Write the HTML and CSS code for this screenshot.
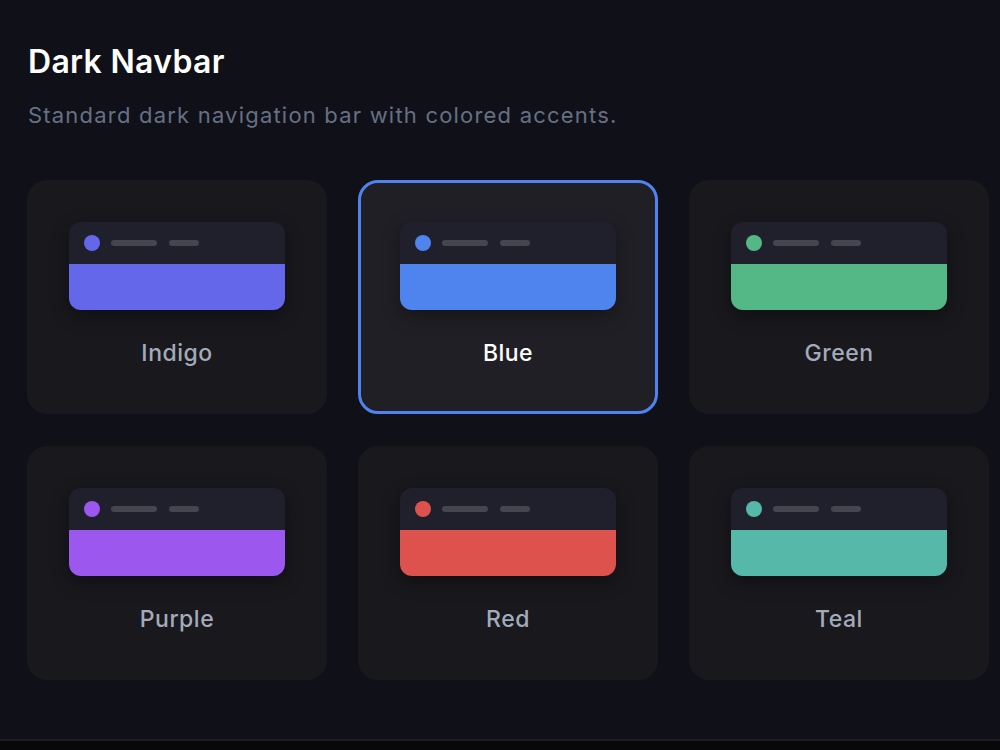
FILE: index.html
```html
<!DOCTYPE html>
<html lang="en">
<head>
  <meta charset="UTF-8">
  <title>Dark Navbar</title>
  <link rel="stylesheet" href="styles.css">
</head>
<body>

  <main class="section">
    <h1>Dark Navbar</h1>
    <p class="desc">Standard dark navigation bar with colored accents.</p>

    <div class="grid">
      <div class="card">
        <div class="preview">
          <div class="nav"><span class="dot indigo"></span><span class="line long"></span><span class="line short"></span></div>
          <div class="body indigo"></div>
        </div>
        <div class="label">Indigo</div>
      </div>

      <div class="card selected">
        <div class="preview">
          <div class="nav"><span class="dot blue"></span><span class="line long"></span><span class="line short"></span></div>
          <div class="body blue"></div>
        </div>
        <div class="label">Blue</div>
      </div>

      <div class="card">
        <div class="preview">
          <div class="nav"><span class="dot green"></span><span class="line long"></span><span class="line short"></span></div>
          <div class="body green"></div>
        </div>
        <div class="label">Green</div>
      </div>

      <div class="card">
        <div class="preview">
          <div class="nav"><span class="dot purple"></span><span class="line long"></span><span class="line short"></span></div>
          <div class="body purple"></div>
        </div>
        <div class="label">Purple</div>
      </div>

      <div class="card">
        <div class="preview">
          <div class="nav"><span class="dot red"></span><span class="line long"></span><span class="line short"></span></div>
          <div class="body red"></div>
        </div>
        <div class="label">Red</div>
      </div>

      <div class="card">
        <div class="preview">
          <div class="nav"><span class="dot teal"></span><span class="line long"></span><span class="line short"></span></div>
          <div class="body teal"></div>
        </div>
        <div class="label">Teal</div>
      </div>
    </div>
  </main>

  <footer class="foot"></footer>

</body>
</html>
```

FILE: styles.css
```css
body {
  font-family: Inter, 'Open Sans', sans-serif;
  background-color: #101018;
  color: #f1f5f9;
  margin: 0;
  height: 100vh;
  display: flex;
  flex-direction: column;
  overflow: hidden;
}
.section {
  flex: 1;
  padding: 0 27px;
}
h1 {
  font-size: 32px;
  font-weight: 600;
  color: #ffffff;
  margin: 42px 0 0 1px;
  line-height: 40px;
  letter-spacing: 0.3px;
}
.desc {
  font-size: 22px;
  color: #657084;
  margin: 19px 0 0 1px;
  line-height: 28px;
  letter-spacing: 1.2px;
}
.grid {
  display: grid;
  grid-template-columns: repeat(3, 300px);
  column-gap: 31px;
  row-gap: 32px;
  margin-top: 51px;
}
.card {
  background-color: #18181d;
  border: 3px solid transparent;
  border-radius: 20px;
  height: 234px;
  box-sizing: border-box;
  padding: 39px 39px 0;
}
.card.selected {
  border-color: #4f83ed;
  background-color: #1f1f25;
}
.preview {
  height: 88px;
  border-radius: 12px;
  overflow: hidden;
  box-shadow: 0 6px 18px rgba(0, 0, 0, 0.35);
}
.nav {
  height: 42px;
  background-color: #201f2c;
  display: flex;
  align-items: center;
  padding-left: 15px;
}
.dot {
  width: 16px;
  height: 16px;
  border-radius: 50%;
  margin-right: 11px;
}
.line {
  height: 6px;
  border-radius: 3px;
  background-color: #45444f;
}
.line.long {
  width: 46px;
  margin-right: 12px;
}
.line.short {
  width: 30px;
}
.body {
  height: 46px;
}
.indigo { background-color: #6467ea; }
.blue { background-color: #4f84ee; }
.green { background-color: #54b886; }
.purple { background-color: #9b57ee; }
.red { background-color: #dd524c; }
.teal { background-color: #55b8a8; }
.label {
  text-align: center;
  font-size: 23px;
  font-weight: 500;
  color: #a3abba;
  line-height: 28px;
  margin-top: 29px;
  letter-spacing: 0.5px;
}
.selected .label {
  color: #ffffff;
}
.foot {
  height: 9px;
  border-top: 2px solid #1c1c22;
  background-color: #08080a;
}
```
